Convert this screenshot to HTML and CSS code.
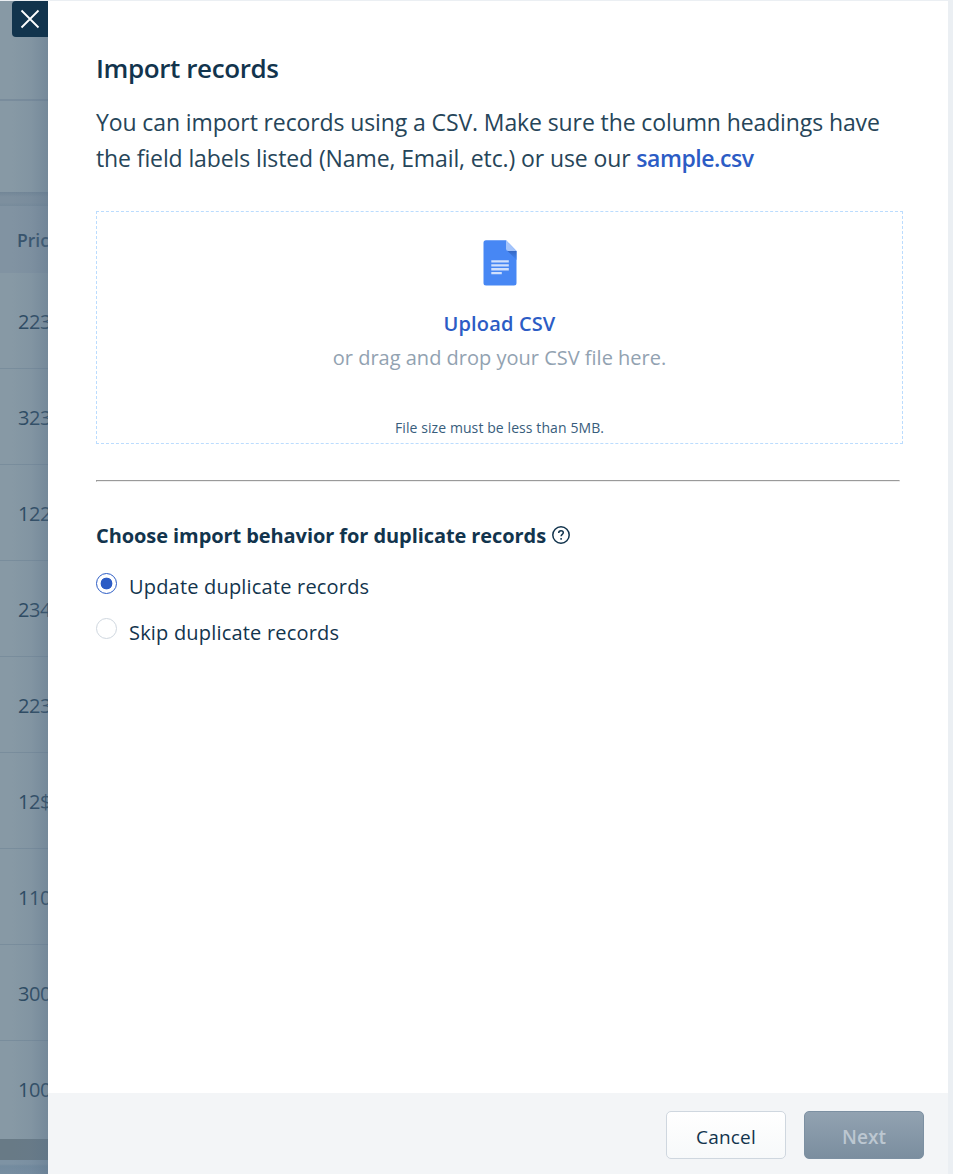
FILE: index.html
```html
<!DOCTYPE html>
<html lang="en">
<head>
  <meta charset="UTF-8" />
  <meta name="viewport" content="width=device-width, initial-scale=1.0"/>
  <title>Import records</title>
  <link rel="stylesheet" href="styles.css">
</head>
<body>
  <div class="page">
    <div class="backdrop">
      <div class="topbar"></div>
      <div class="toolbar"></div>
      <div class="gap"></div>
      <div class="table-head">Pric</div>
      <div class="row">223</div>
      <div class="row">323</div>
      <div class="row">122</div>
      <div class="row">234</div>
      <div class="row">223</div>
      <div class="row">12$</div>
      <div class="row">110</div>
      <div class="row">300</div>
      <div class="row last">100</div>
      <div class="scrollbar"></div>
      <div class="table-end"></div>
      <button class="close" aria-label="Close">
        <svg width="20" height="20" viewBox="0 0 20 20"><path d="M1.5 1.5l17 17M18.5 1.5l-17 17"/></svg>
      </button>
    </div>

    <div class="panel">
      <div class="content">
        <h1>Import records</h1>
        <p class="intro">You can import records using a CSV. Make sure the column headings have<br>the field labels listed (Name, Email, etc.) or use our <a class="sample" href="#">sample.csv</a></p>

        <div class="dropzone">
          <svg class="doc" width="34" height="46" viewBox="0 0 34 46">
            <defs>
              <linearGradient id="fold" x1="0" y1="0" x2="0" y2="1">
                <stop offset="0" stop-color="#3568c4"/>
                <stop offset="1" stop-color="#4386f5"/>
              </linearGradient>
            </defs>
            <path fill="#4787f4" d="M3 .3h20L33.500 11v32a2.500 2.500 0 0 1-2.500 2.500H3A2.500 2.500 0 0 1 .5 43V2.800A2.500 2.500 0 0 1 3 .3z"/>
            <path fill="url(#fold)" d="M24.500 11h9v9z"/>
            <path fill="#a4c4fb" d="M23 .3 33.500 11h-8A2.500 2.500 0 0 1 23 8.500z"/>
            <path fill="#d0e0fc" d="M8.300 20.300h17.500v2.300H8.300zM8.300 24.200h17.500v2.300H8.300zM8.300 28.100h17.500v2.300H8.300zM8.300 32h10.500v2.300H8.300z"/>
          </svg>
          <a class="upload" href="#">Upload CSV</a>
          <div class="hint">or drag and drop your CSV file here.</div>
          <div class="limit">File size must be less than 5MB.</div>
        </div>

        <hr>

        <h2>Choose import behavior for duplicate records
          <svg class="help" width="18" height="18" viewBox="0 0 18 18">
            <circle cx="9" cy="9" r="8.200"/>
            <path d="M6.700 7.100c0-1.500 1-2.400 2.300-2.400s2.300.8 2.300 2.100c0 1.600-2.200 1.700-2.200 3.500"/>
            <path d="M9.100 12.100v1.700"/>
          </svg>
        </h2>
        <label class="option"><input type="radio" name="duplicates" checked>Update duplicate records</label>
        <label class="option"><input type="radio" name="duplicates">Skip duplicate records</label>
      </div>

      <div class="footer">
        <button class="btn cancel">Cancel</button>
        <button class="btn next" disabled>Next</button>
      </div>
    </div>
  </div>
</body>
</html>
```
FILE: styles.css
```css
* {
  box-sizing: border-box;
}

body {
  margin: 0;
  font-family: "Open Sans", sans-serif;
  color: #12344d;
  background: #ebeff3;
}

.page {
  display: flex;
  height: 1174px;
  border-top: 1px solid #ebeff3;
  overflow: hidden;
}

/* page behind the panel */
.backdrop {
  position: relative;
  width: 48px;
  flex: none;
  overflow: hidden;
  background: #8799a5;
  color: #29475f;
  font-size: 20px;
}

.backdrop::after {
  content: "";
  position: absolute;
  inset: 0;
  background: linear-gradient(to right, rgba(100, 122, 145, 0) 25%, rgba(100, 122, 145, 0.15) 65%, rgba(90, 113, 137, 0.4));
}

.topbar {
  height: 100px;
  border-bottom: 2px solid #798c9c;
}

.toolbar {
  height: 91px;
}

.gap {
  height: 14px;
  background: linear-gradient(#728697, #7d8f9e 35%, #7d8f9e 75%, #778b9b);
}

.table-head {
  height: 67px;
  padding: 1px 0 0 17px;
  line-height: 67px;
  font-size: 17.5px;
  font-weight: 600;
  background: #8193a2;
  color: #34516a;
}

.row {
  height: 96px;
  padding: 1px 0 0 18px;
  line-height: 96px;
  letter-spacing: -0.4px;
  border-bottom: 1px solid #798d9c;
}

.row.last {
  border-bottom: 0;
}

.scrollbar {
  height: 21px;
  margin-top: 2px;
  background: #687a86;
}

.table-end {
  height: 20px;
  background: linear-gradient(#7e93a4 20%, #738b9f 30%, #7a90a2);
}

.close {
  position: absolute;
  z-index: 1;
  top: 0;
  right: 0;
  width: 36px;
  height: 36px;
  padding: 0;
  border: 0;
  border-radius: 4px 0 0 4px;
  background: #12344d;
}

.close svg {
  display: block;
  margin: 8px;
  fill: none;
  stroke: #fff;
  stroke-width: 1.8;
}

.panel {
  width: 900px;
  display: flex;
  flex-direction: column;
  background: #fff;
}

.content {
  flex: 1;
  padding: 49px 45px 0 48px;
}

h1 {
  margin: 0;
  font-size: 26px;
  font-weight: 600;
  line-height: 36px;
  letter-spacing: -0.4px;
}

.intro {
  margin: 18px 0 35px;
  font-size: 23px;
  line-height: 36px;
  letter-spacing: -0.11px;
  color: #264559;
  white-space: nowrap;
}

a {
  color: #2c5cc5;
  text-decoration: none;
}

.sample {
  font-weight: 600;
  letter-spacing: -0.45px;
}

.dropzone {
  display: flex;
  flex-direction: column;
  align-items: center;
  height: 233px;
  padding-top: 28px;
  border: 1px dashed #bbdcfe;
}

.doc {
  margin-bottom: 21px;
}

.upload {
  font-size: 20px;
  font-weight: 600;
  line-height: 34px;
  letter-spacing: 0.15px;
}

.hint {
  font-size: 20px;
  line-height: 34px;
  color: #92a2b1;
}

.limit {
  margin-top: 41px;
  font-size: 14px;
  line-height: 24px;
  letter-spacing: 0.09px;
  color: #385d7c;
}

hr {
  width: 804px;
  margin: 36px 0 39px;
  border: 1px solid;
  border-color: #9a9a9a #eee #eee #9a9a9a;
}

h2 {
  margin: 0 0 21px;
  font-size: 20px;
  font-weight: 700;
  line-height: 30px;
  letter-spacing: -0.08px;
}

.help {
  margin-left: 1px;
  vertical-align: -1px;
  fill: none;
  stroke: #12344d;
  stroke-width: 1.5;
}

.option {
  display: flex;
  align-items: flex-start;
  height: 46px;
  font-size: 20px;
  font-weight: 500;
  line-height: 30px;
  letter-spacing: 0.19px;
}

.option input {
  appearance: none;
  width: 21px;
  height: 21px;
  margin: 1px 12px 0 0;
  border: 1px solid #cfd7df;
  border-radius: 50%;
}

.option + .option input {
  margin-top: 0;
}

.option input:checked {
  border-color: #2c5cc5;
  background: radial-gradient(circle, #2c5cc5 5.6px, #fff 6.2px);
}

.footer {
  display: flex;
  justify-content: flex-end;
  gap: 18px;
  height: 81px;
  padding: 18px 24px 0;
  background: #f3f5f7;
}

.btn {
  width: 120px;
  height: 48px;
  padding: 3px 0 0;
  border: 1px solid #cfd7df;
  border-radius: 5px;
  font-family: inherit;
  font-size: 19px;
}

.cancel {
  color: #12344d;
  font-weight: 500;
  letter-spacing: 0.2px;
  background: linear-gradient(#fff, #f7f9fa);
}

.next {
  color: #bcc7d1;
  font-weight: 600;
  border-color: #7c90a2;
  background: linear-gradient(#92a2b1, #7b8e9f);
}
```
